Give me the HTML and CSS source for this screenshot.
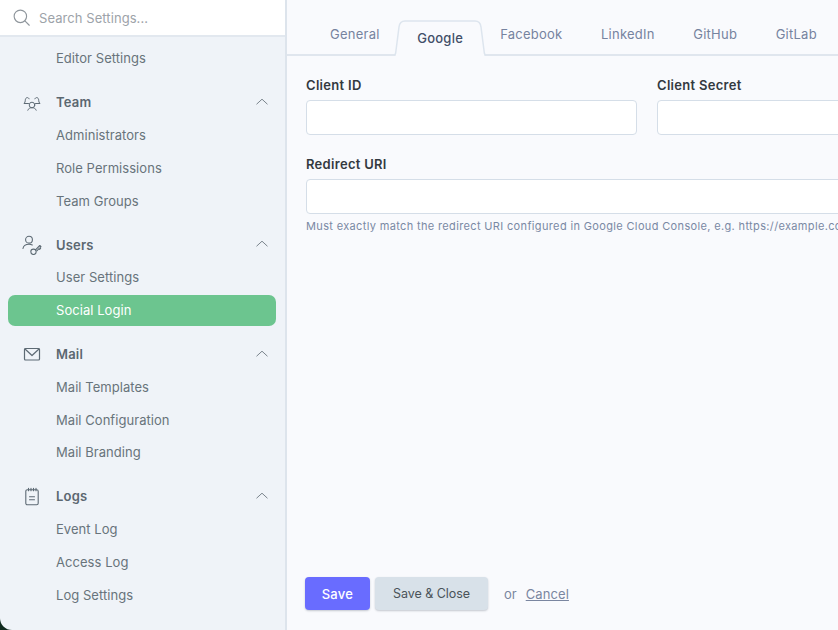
FILE: index.html
```html
<!DOCTYPE html>
<html lang="en">

<head>
  <meta charset="UTF-8">
  <title>Social Login</title>
  <link rel="stylesheet" href="styles.css">
</head>

<body>
  <div class="app">
    <aside class="sidebar">
      <div class="search">
        <svg class="search-icon" width="17" height="17" viewBox="0 0 18 18" fill="none" stroke="#8f969c" stroke-width="1.200" stroke-linecap="round">
          <circle cx="7.800" cy="7.800" r="6.600"/>
          <path d="M12.600 12.600l4.600 4.600"/>
        </svg>
        <span>Search Settings...</span>
      </div>

      <nav class="nav">
        <a class="nav-item first">Editor Settings</a>

        <div class="nav-group">
          <svg class="group-icon" width="20" height="20" viewBox="0 0 20 20" fill="none" stroke="#5d6a74" stroke-width="1" stroke-linecap="round" stroke-linejoin="round">
            <circle cx="10" cy="13" r="2.800"/>
            <path d="M5.800 18.200c.5-1.600 2.100-2.500 4.200-2.500s3.700.9 4.200 2.500"/>
            <path d="M6.500 11.500H2c.9-1 1.300-1.700 1.300-3.200 0-1.500.8-2.700 2-2.700.8 0 1.500.5 1.800 1.200"/>
            <path d="M12.900 6.800c.3-.7 1-1.200 1.800-1.200 1.200 0 2 1.200 2 2.700 0 1.500.4 2.200 1.300 3.200h-4.500"/>
          </svg>
          <span>Team</span>
          <svg class="chevron" width="12" height="7" viewBox="0 0 12 7" fill="none" stroke="#7a848c" stroke-width="1" stroke-linecap="round" stroke-linejoin="round"><path d="M.8 6L6 1.200 11.200 6"/></svg>
        </div>
        <a class="nav-item">Administrators</a>
        <a class="nav-item">Role Permissions</a>
        <a class="nav-item">Team Groups</a>

        <div class="nav-group">
          <svg class="group-icon" width="20" height="20" viewBox="0 0 20 20" fill="none" stroke="#5d6a74" stroke-width="1.100" stroke-linecap="round" stroke-linejoin="round">
            <circle cx="7" cy="4.700" r="3.400"/>
            <path d="M1 13.500c.4-2.700 2.800-4.200 6-4.200 1.200 0 2.400.2 3.300.7"/>
            <circle cx="11.500" cy="16.800" r="2.700"/>
            <path d="M13.500 14.900l4.300-4.400 1.200 1.200-.9.900.5.700-1 1-.6-.6-1.900 2"/>
          </svg>
          <span>Users</span>
          <svg class="chevron" width="12" height="7" viewBox="0 0 12 7" fill="none" stroke="#7a848c" stroke-width="1" stroke-linecap="round" stroke-linejoin="round"><path d="M.8 6L6 1.200 11.200 6"/></svg>
        </div>
        <a class="nav-item">User Settings</a>
        <a class="nav-item active">Social Login</a>

        <div class="nav-group">
          <svg class="group-icon" width="20" height="20" viewBox="0 0 20 20" fill="none" stroke="#5d6a74" stroke-width="1.200" stroke-linecap="round" stroke-linejoin="round">
            <rect x="2.500" y="4.500" width="15" height="11.500" rx="1"/>
            <path d="M3 5l7 6.500L17 5"/>
          </svg>
          <span>Mail</span>
          <svg class="chevron" width="12" height="7" viewBox="0 0 12 7" fill="none" stroke="#7a848c" stroke-width="1" stroke-linecap="round" stroke-linejoin="round"><path d="M.8 6L6 1.200 11.200 6"/></svg>
        </div>
        <a class="nav-item">Mail Templates</a>
        <a class="nav-item">Mail Configuration</a>
        <a class="nav-item">Mail Branding</a>

        <div class="nav-group">
          <svg class="group-icon" width="20" height="20" viewBox="0 0 20 20" fill="none" stroke="#5d6a74" stroke-width="1.100" stroke-linecap="round" stroke-linejoin="round">
            <rect x="3.800" y="3.800" width="12.400" height="15" rx="1.500"/>
            <path d="M6.500 2.300v2.500M9 2.300v2.500M11.500 2.300v2.500M14 2.300v2.500M7.500 10.800h5M7.500 13.800h5"/>
          </svg>
          <span>Logs</span>
          <svg class="chevron" width="12" height="7" viewBox="0 0 12 7" fill="none" stroke="#7a848c" stroke-width="1" stroke-linecap="round" stroke-linejoin="round"><path d="M.8 6L6 1.200 11.200 6"/></svg>
        </div>
        <a class="nav-item">Event Log</a>
        <a class="nav-item">Access Log</a>
        <a class="nav-item">Log Settings</a>
      </nav>
    </aside>

    <main class="main">
      <div class="tabs">
        <a class="tab">General</a>
        <a class="tab tab-active">
          <svg class="tab-shape" width="92" height="36" viewBox="0 0 92 36">
            <path fill="#f9fafd" d="M1.600 36L5 7C5.500 3 7.500 1 11 1h70c3.500 0 5.500 2 6 6l3.400 29z"/>
            <path fill="none" stroke="#dde5ee" stroke-width="1.500" d="M0 34.500h.5c.7 0 1-.4 1.100-1L5 7C5.500 3 7.500 1 11 1h70c3.500 0 5.500 2 6 6l3.400 26.500c.1.600.4 1 1.100 1h.5"/>
          </svg>
          <span>Google</span>
        </a>
        <a class="tab">Facebook</a>
        <a class="tab">LinkedIn</a>
        <a class="tab">GitHub</a>
        <a class="tab">GitLab</a>
      </div>

      <form class="form">
        <div class="form-grid">
          <div class="field">
            <label>Client ID</label>
            <input type="text">
          </div>
          <div class="field">
            <label>Client Secret</label>
            <input type="text">
          </div>
          <div class="field wide">
            <label>Redirect URI</label>
            <input type="text">
            <p class="hint">Must exactly match the redirect URI configured in Google Cloud Console, e.g. https://example.com/auth/google/callback</p>
          </div>
        </div>

        <div class="actions">
          <button type="button" class="btn btn-primary">Save</button>
          <button type="button" class="btn btn-secondary">Save &amp; Close</button>
          <span class="or">or</span>
          <a class="cancel" href="#">Cancel</a>
        </div>
      </form>
    </main>
  </div>
</body>

</html>
```

FILE: styles.css
```css
html, body {
  height: 100%;
}

body {
  margin: 0;
  background-color: #0f2a1e;
  font-family: 'Inter', sans-serif;
  font-size: 13px;
  overflow: hidden;
}

.app {
  display: flex;
  height: 630px;
  width: 838px;
  overflow: hidden;
  border-bottom-left-radius: 12px;
}

/* Left column */
.sidebar {
  flex: 0 0 285px;
  background-color: #eff3f8;
  border-right: 2px solid #dde4ec;
}

.search {
  display: flex;
  align-items: center;
  gap: 9px;
  height: 35px;
  padding-left: 13px;
  background-color: #fff;
  border-bottom: 2px solid #e2e8ef;
  color: #9da3a9;
  font-size: 13px;
  letter-spacing: 0.07px;
}

.search-icon {
  flex: none;
}

.nav-item {
  display: flex;
  align-items: center;
  height: 31px;
  margin: 0 9px 1.750px 8px;
  padding-left: 48px;
  border-radius: 7px;
  color: #68737b;
  letter-spacing: 0.05px;
}

.nav-item.first {
  margin-top: 5.750px;
}

.nav-item.active {
  background-color: #6cc58f;
  color: #fff;
}

.nav-group {
  display: flex;
  align-items: center;
  height: 31px;
  margin: 13px 17px 1.750px 22px;
  color: #5b6770;
  font-weight: 600;
  letter-spacing: 0.2px;
}

.group-icon {
  flex: none;
  margin-right: 14px;
}

.chevron {
  flex: none;
  margin-left: auto;
  margin-bottom: 2px;
}

/* Right column */
.main {
  position: relative;
  flex: 1;
  min-width: 0;
  display: flex;
  flex-direction: column;
  background-color: #f9fafd;
}

.tabs {
  display: flex;
  align-items: center;
  height: 54px;
  flex: none;
  padding: 0 0 0 43px;
  border-bottom: 2px solid #e0e6ee;
  box-sizing: content-box;
}

.tab {
  flex: none;
  color: #76839f;
  font-size: 13px;
  letter-spacing: 0.25px;
  margin-right: 38.500px;
  white-space: nowrap;
  position: relative;
  top: 7px;
}

.tab-active {
  width: 92px;
  height: 36px;
  margin: 0 14px 0 -24px;
  top: 11px;
  color: #434f69;
  font-weight: 500;
  display: flex;
  align-items: center;
  justify-content: center;
}

.tab-shape {
  position: absolute;
  left: 0;
  top: 0;
}

.tab-active span {
  position: relative;
}

.form {
  flex: 1;
  display: flex;
  flex-direction: column;
  padding: 0 0 20px 19px;
}

.form-grid {
  display: grid;
  grid-template-columns: 331px 331px;
  column-gap: 20px;
  row-gap: 20px;
  padding-top: 20px;
}

.wide {
  grid-column: 1 / 3;
}

.field label {
  display: block;
  margin-bottom: 6px;
  color: #33393f;
  font-weight: 600;
  line-height: 18px;
  letter-spacing: 0.3px;
}

.field input {
  display: block;
  box-sizing: border-box;
  width: 100%;
  height: 35px;
  padding: 0 10px;
  background-color: #fff;
  border: 1px solid #d5dee8;
  border-radius: 4px;
}

.hint {
  margin: 4px 0 0;
  color: #7a89a4;
  font-size: 11px;
  line-height: 16px;
  letter-spacing: 0.35px;
  white-space: nowrap;
}

.actions {
  display: flex;
  align-items: center;
  margin-top: auto;
  margin-left: -1px;
}

.btn {
  height: 33px;
  padding: 0;
  border: none;
  border-radius: 4px;
  font-family: inherit;
  font-size: 13px;
  font-weight: 500;
  box-shadow: 0 1px 2px rgba(40, 50, 70, 0.25);
}

.btn-primary {
  width: 65px;
  background-color: #696cff;
  color: #fff;
  letter-spacing: 0.3px;
}

.btn-secondary {
  width: 113px;
  margin-left: 5px;
  background-color: #d8e1e9;
  color: #4a5359;
  font-size: 12.500px;
  font-weight: 400;
  letter-spacing: -0.05px;
}

.or {
  margin-left: 16px;
  color: #7a86a0;
}

.cancel {
  margin-left: 9px;
  color: #7a86a0;
  letter-spacing: 0.1px;
}
```
